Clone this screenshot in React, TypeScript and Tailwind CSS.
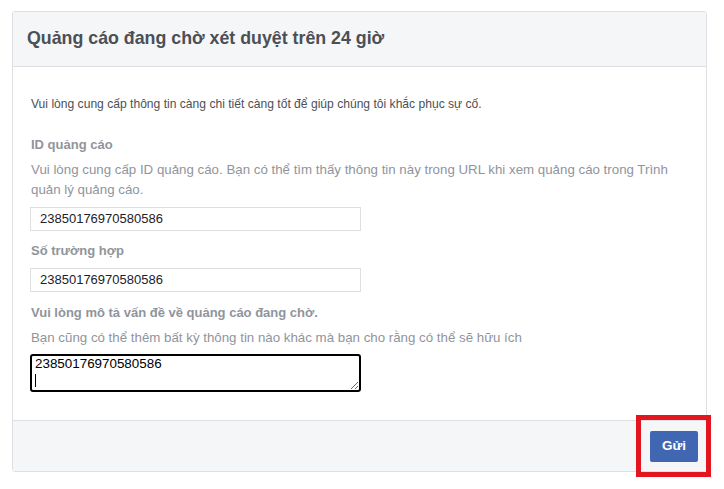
import React from "react";

export default function App() {
  const font = { fontFamily: '"Liberation Sans", Arial, sans-serif' };
  return (
    <div className="relative w-[724px] h-[489px] bg-white" style={font}>
      <div className="absolute left-[12px] top-[11px] w-[695px] h-[461px] border border-[#dddfe2] rounded-[3px] flex flex-col overflow-hidden">
        <div className="h-[55px] shrink-0 bg-[#f5f6f7] border-b border-[#dddfe2] flex items-center pl-[14px]">
          <h1 className="text-[17.8px] font-bold text-[#4b4f56] leading-none">Quảng cáo đang chờ xét duyệt trên 24 giờ</h1>
        </div>
        <div className="flex-1 flex flex-col pl-[17px] pt-[29px]">
          <p className="text-[12.1px] leading-[16px] text-[#4b4f56] pl-px">Vui lòng cung cấp thông tin càng chi tiết càng tốt để giúp chúng tôi khắc phục sự cố.</p>
          <div className="mt-[23px] text-[13px] leading-[20px] font-bold text-[#90949c] pl-px">ID quảng cáo</div>
          <p className="mt-[5px] text-[13.3px] leading-[20px] text-[#90949c] pl-px w-[650px]">Vui lòng cung cấp ID quảng cáo. Bạn có thể tìm thấy thông tin này trong URL khi xem quảng cáo trong Trình quản lý quảng cáo.</p>
          <div className="mt-[7px] w-[331px] h-[24px] border border-[#dddfe2] flex items-center pl-[9px] text-[13px] text-[#1d2129]">23850176970580586</div>
          <div className="mt-[10px] text-[13px] leading-[20px] font-bold text-[#90949c] pl-px">Số trường hợp</div>
          <div className="mt-[7px] w-[331px] h-[24px] border border-[#dddfe2] flex items-center pl-[9px] text-[13px] text-[#1d2129]">23850176970580586</div>
          <div className="mt-[11px] text-[13px] leading-[20px] font-bold text-[#90949c] pl-px">Vui lòng mô tả vấn đề về quảng cáo đang chờ.</div>
          <p className="mt-[5px] text-[13.3px] leading-[20px] text-[#90949c] pl-px">Bạn cũng có thể thêm bất kỳ thông tin nào khác mà bạn cho rằng có thể sẽ hữu ích</p>
          <div className="relative mt-[6px] w-[331px] h-[38px]">
            <textarea
              readOnly
              value="23850176970580586"
              className="w-[331px] h-[38px] border-2 border-black rounded-[3px] px-[3px] py-[1px] text-[13.4px] leading-[14px] text-black outline-none"
              style={font}
            />
            <span className="absolute left-[5px] top-[20px] w-px h-[13px] bg-black" />
          </div>
        </div>
        <div className="h-[51px] shrink-0 bg-[#f5f6f7] border-t border-[#dddfe2] flex items-center justify-end pr-[8px]">
          <button className="w-[48px] h-[31px] bg-[#4267b2] rounded-[2px] text-white text-[13.5px] font-bold">Gửi</button>
        </div>
      </div>
      <div className="absolute left-[636px] top-[415px] w-[75px] h-[62px] border-[5px] border-[#e3161f]" />
    </div>
  );
}
